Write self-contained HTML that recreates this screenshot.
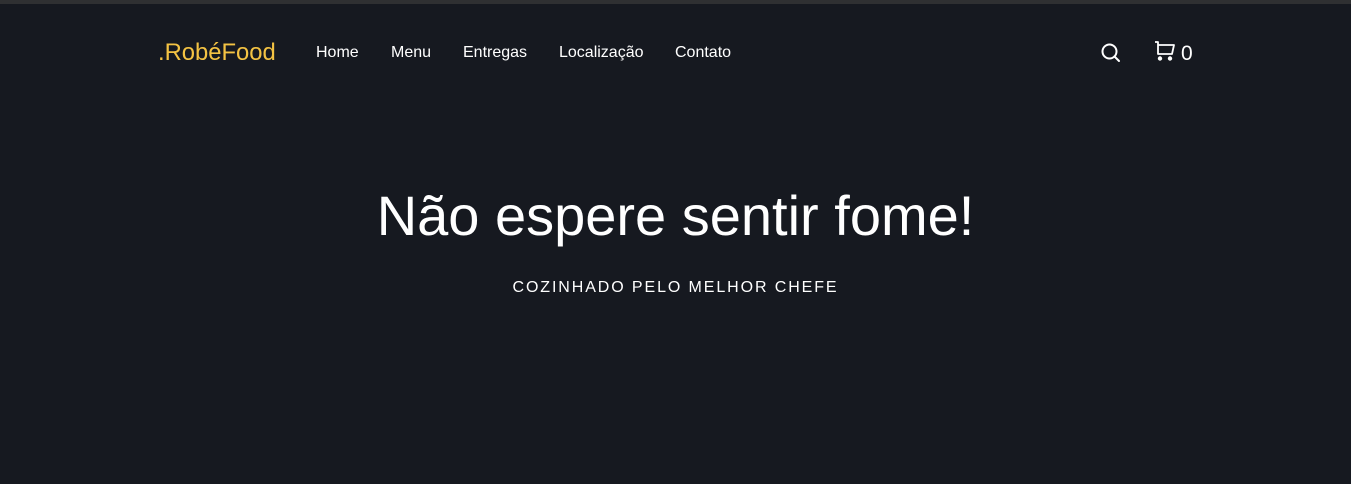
<!DOCTYPE html>
<html><head><meta charset="utf-8"><style>
body{margin:0;width:1351px;height:484px;background:#161920;font-family:"Liberation Sans",sans-serif;color:#fff;overflow:hidden;position:relative}
.top{position:absolute;top:0;left:0;width:100%;height:4px;background:#2f3032}
.logo{position:absolute;left:158px;top:39px;font-size:23.8px;color:#f4c343}
.nav{position:absolute;top:44px;font-size:16px}
h1{position:absolute;top:184px;left:0;width:1351px;text-align:center;margin:0;font-weight:400;font-size:56px;line-height:64px}
.sub{position:absolute;top:279px;left:0;width:1351px;text-align:center;font-size:16px;letter-spacing:1.9px}
.cnt{position:absolute;left:1181px;top:42px;font-size:21px}
</style></head><body>
<div class="top"></div>
<div class="logo">.RobéFood</div>
<div class="nav" style="left:316px">Home</div>
<div class="nav" style="left:391px">Menu</div>
<div class="nav" style="left:463px">Entregas</div>
<div class="nav" style="left:559px">Localização</div>
<div class="nav" style="left:675px">Contato</div>
<svg style="position:absolute;left:1100px;top:42px" width="22" height="22" viewBox="0 0 22 22" fill="none" stroke="#fff" stroke-width="2" stroke-linecap="round"><circle cx="9.5" cy="9.5" r="7"/><path d="M14.5 14.5L19 19"/></svg>
<svg style="position:absolute;left:1154px;top:40px" width="24" height="22" viewBox="0 0 24 22" fill="none" stroke="#fff" stroke-width="1.8" stroke-linejoin="round"><path d="M1 2H4V14H18L20 5H4"/><circle cx="6" cy="18.5" r="1.3" fill="#fff"/><circle cx="16" cy="18.5" r="1.3" fill="#fff"/></svg>
<div class="cnt">0</div>
<h1>Não espere sentir fome!</h1>
<div class="sub">COZINHADO PELO MELHOR CHEFE</div>
</body></html>
